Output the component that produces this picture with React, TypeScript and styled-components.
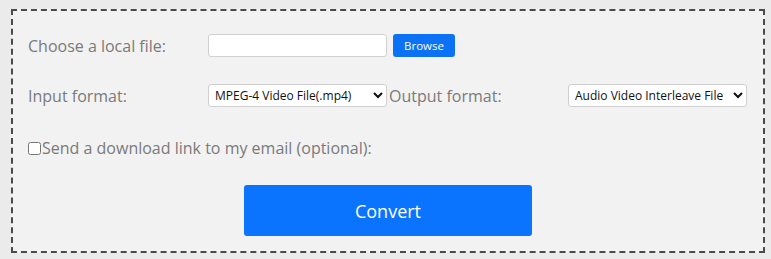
import styled, { createGlobalStyle } from 'styled-components'

const GlobalStyle = createGlobalStyle`
  html, body {
    margin: 0;
    padding: 0;
    background: #ebebeb;
    font-family: 'Open Sans', 'Noto Sans', sans-serif;
  }
`

const Page = styled.div`
  width: 771px;
  height: 259px;
  box-sizing: border-box;
  padding: 9px 6px 6px 11px;
`

const Panel = styled.form`
  box-sizing: border-box;
  height: 244px;
  border: 2px dashed #4a4a4a;
  background: #f2f2f2;
  padding: 23px 0 0 15px;
  display: flex;
  flex-direction: column;
`

const Row = styled.div<{ $mt?: number }>`
  display: grid;
  grid-template-columns: 180px 181px 179px 180px;
  align-items: center;
  height: 23px;
  margin-top: ${({ $mt }) => $mt ?? 0}px;
`

const Label = styled.label`
  font-size: 16px;
  color: #7a7a7a;
  white-space: nowrap;
`

const FileCell = styled.div`
  display: flex;
  align-items: center;
  gap: 6px;
`

const TextInput = styled.input`
  box-sizing: border-box;
  width: 179px;
  height: 23px;
  border: 1px solid #d0d0d0;
  border-radius: 3px;
  background: #fff;
  outline: none;
`

const SmallButton = styled.button`
  height: 23px;
  padding: 0 11px;
  border: none;
  border-radius: 3px;
  background: #0b72f5;
  color: #fff;
  font-family: inherit;
  font-size: 11.5px;
`

const Select = styled.select`
  box-sizing: border-box;
  width: 179px;
  height: 23px;
  border: 1px solid #cfcfcf;
  border-radius: 3px;
  background: #fff;
  color: #111;
  font-family: inherit;
  font-size: 12px;
  padding: 0 2px;
`

const CheckRow = styled.label`
  display: flex;
  align-items: center;
  margin-top: 30px;
  font-size: 16px;
  color: #7a7a7a;
`

const Check = styled.input`
  width: 13px;
  height: 13px;
  margin: 0 1px 0 0;
`

const ConvertButton = styled.button`
  align-self: flex-start;
  margin: 26px 0 0 216px;
  width: 288px;
  height: 51px;
  border: none;
  border-radius: 3px;
  background: #0a74ff;
  color: #fff;
  font-family: inherit;
  font-size: 18px;
`

export default function App() {
  return (
    <>
      <GlobalStyle />
      <Page>
        <Panel onSubmit={(e) => e.preventDefault()}>
          <Row>
            <Label>Choose a local file:</Label>
            <FileCell>
              <TextInput type="text" />
              <SmallButton type="button">Browse</SmallButton>
            </FileCell>
          </Row>
          <Row $mt={27}>
            <Label>Input format:</Label>
            <Select defaultValue="mp4">
              <option value="mp4">MPEG-4 Video File(.mp4)</option>
            </Select>
            <Label>Output format:</Label>
            <Select defaultValue="avi">
              <option value="avi">Audio Video Interleave File</option>
            </Select>
          </Row>
          <CheckRow>
            <Check type="checkbox" />
            Send a download link to my email (optional):
          </CheckRow>
          <ConvertButton type="submit">Convert</ConvertButton>
        </Panel>
      </Page>
    </>
  )
}
